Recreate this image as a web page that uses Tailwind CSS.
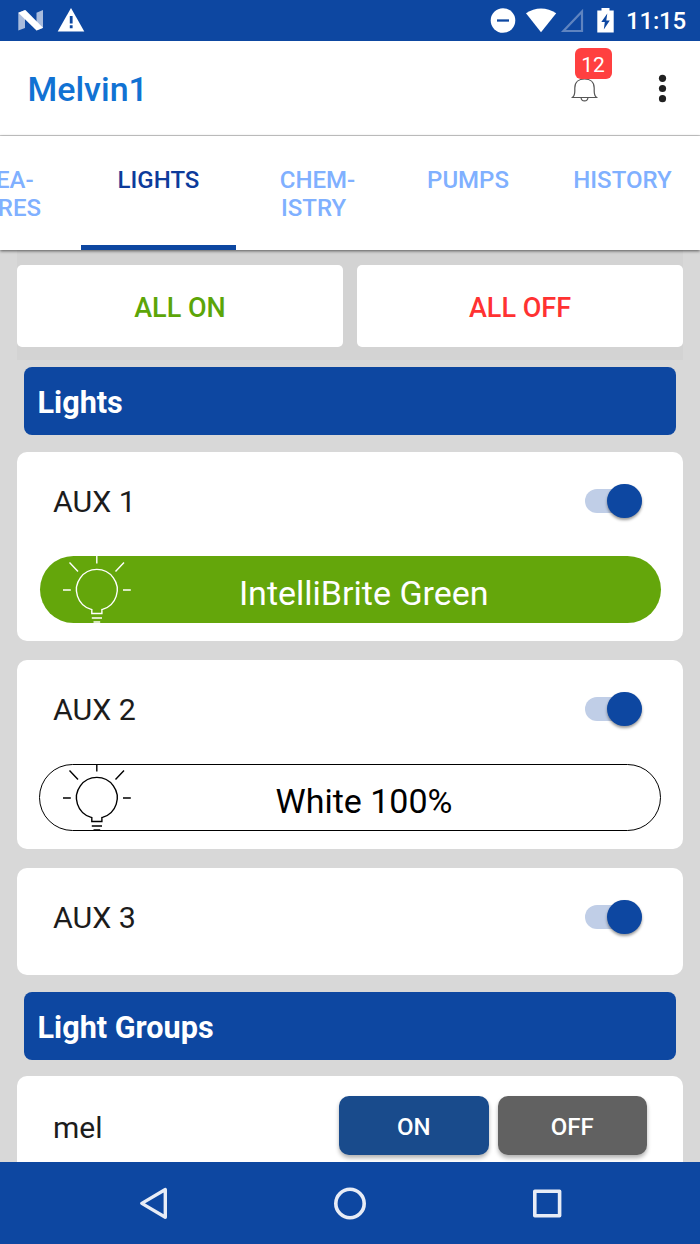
<!DOCTYPE html>
<html lang="en">
<head>
<meta charset="utf-8">
<title>Melvin1 – Lights</title>
<script src="https://cdn.jsdelivr.net/npm/@tailwindcss/browser@4"></script>
</head>
<body class="w-[700px] h-[1244px] overflow-hidden flex flex-col bg-[#d8d8d8] font-['Roboto',sans-serif] text-black">

<svg class="hidden">
  <symbol id="bulb" viewBox="0 0 74 67">
    <g fill="none" stroke="currentColor" stroke-width="1.400">
      <path d="M31.800 57.500V53.500L30.600 53.200A20.4 20.4 0 1 1 43.100 53.200L41.900 53.500V57.500Z"/>
      <path d="M36.800 0V7.500M9.500 6.500L18 15.500M64 6.500L55.500 15.500M3 34H10.800M63 34H70.800M31.800 62H42M33.500 66H40.200"/>
    </g>
  </symbol>
</svg>

<!-- Status bar -->
<div class="h-[41px] shrink-0 bg-[#0d47a1] flex items-center text-white">
  <svg class="w-[100px] h-[41px] shrink-0" viewBox="0 0 100 41">
    <path d="M18.300 12.800L25 10V28L18.300 30.500Z" fill="#a9bcdd"/>
    <path d="M36.500 12.800L43 10V28L36.500 30.500Z" fill="#a9bcdd"/>
    <path d="M18.300 12.800L25.400 10L43 27.700L36.500 30.500Z" fill="#fff"/>
    <path d="M71 8L84.300 31.500H57.700Z" fill="#fff"/>
    <path d="M71.200 16V23.500M71.200 25.300V28.200" stroke="#0d47a1" stroke-width="2.800"/>
  </svg>
  <svg class="w-[160px] h-[41px] shrink-0 ml-[366px]" viewBox="467 0 160 41">
    <circle cx="504" cy="20.500" r="12.300" fill="#fff"/>
    <path d="M498 20.500H510" stroke="#0d47a1" stroke-width="2.300"/>
    <path d="M542 32.200L527 13.300C536 7 548 7 557.200 13.300Z" fill="#fff"/>
    <path d="M583 11.500V31H564.500Z" fill="none" stroke="#5f84c0" stroke-width="2.200"/>
    <path d="M598.300 10.500H602.500V8H610.500V10.500H614.700V32.500H598.300Z" fill="#fff"/>
    <path d="M608.300 13.500L602.300 22H605.800L604.800 29.500L610.800 20.500H607.300Z" fill="#0d47a1"/>
  </svg>
  <div class="text-[24px] leading-[41px] font-medium tracking-[-0.200px] pt-[2px]">11:15</div>
</div>

<!-- App header -->
<header class="h-[95px] shrink-0 bg-white border-b border-[#d0d0d0] flex items-center">
  <h1 class="ml-[27.500px] pt-[2px] text-[34px] leading-[40px] font-medium text-[#1172d3]">Melvin1</h1>
  <div class="ml-auto relative w-[44px] h-[94px]">
    <svg class="w-[44px] h-[94px]" viewBox="570 41 44 94" fill="none" stroke="#555" stroke-width="1.200">
      <path d="M571.500 97.500H597.500M572.500 97.300C574.300 96 574.800 94 574.800 91V88C574.800 82 579 79 584.500 79C590 79 594.200 82 594.200 88V91C594.200 94 594.700 96 596.500 97.300"/>
      <path d="M581 97.500C581.500 102 587.500 102 588 97.500"/>
    </svg>
    <span class="absolute left-[4.500px] top-[7px] w-[37px] h-[31px] rounded-[6px] bg-[#ff4040] text-white text-[21px] leading-[34px] text-center">12</span>
  </div>
  <svg class="w-[86px] h-[94px]" viewBox="614 41 86 94" fill="#212121">
    <circle cx="662.500" cy="78.300" r="3.600"/><circle cx="662.500" cy="88.500" r="3.600"/><circle cx="662.500" cy="98.700" r="3.600"/>
  </svg>
</header>

<!-- Tabs -->
<nav class="relative z-10 h-[114px] shrink-0 bg-white shadow-[0_1px_3px_rgba(0,0,0,0.6)] flex text-[24px] leading-[28px] font-medium text-center text-[#80b0ff]">
  <div class="w-[81px] pt-[30px] flex justify-end pr-[40px] whitespace-nowrap"><span><span class="pl-[8px]">FEA-</span><br>TURES</span></div>
  <div class="w-[155px] pt-[30px] text-[#0d3b9b] border-b-[5px] border-[#0d47a1]">LIGHTS</div>
  <div class="w-[155px] pt-[30px]"><span class="pl-[8px]">CHEM-</span><br>ISTRY</div>
  <div class="w-[154px] pt-[30px]">PUMPS</div>
  <div class="w-[155px] pt-[30px]">HISTORY</div>
</nav>

<main class="h-[912px] shrink-0 overflow-hidden px-[17px]">
  <div class="h-[110px] bg-[#d3d3d3] pt-[15px] flex gap-[14px] text-[27px] leading-[86px] font-medium text-center">
    <div class="flex-1 h-[81.500px] bg-white rounded-[5px] text-[#5ca508]">ALL ON</div>
    <div class="flex-1 h-[81.500px] bg-white rounded-[5px] text-[#ff3232]">ALL OFF</div>
  </div>

  <h2 class="mx-[7px] mt-[7px] h-[68px] rounded-[8px] bg-[#0d47a1] pl-[13.500px] text-white text-[30.600px] leading-[71px] font-bold">Lights</h2>

  <section class="mt-[17px] h-[188.500px] rounded-[10px] bg-white px-[22px] pt-[31px]">
    <div class="h-[40px] flex items-center justify-between pl-[14px] pr-[19.500px]">
      <span class="text-[30.400px] leading-[40px] -mt-[2px] text-[#1c1c1c]">AUX 1</span>
      <div class="w-[57px] h-[24px] -mt-[5px] rounded-full bg-[#c0cee7] flex items-center justify-end"><div class="w-[34.500px] h-[34.500px] mt-px rounded-full bg-[#0d47a1] shadow-[0_2px_3px_rgba(0,0,0,0.4)]"></div></div>
    </div>
    <div class="mt-[33px] h-[66.500px] mx-[0.500px] rounded-full bg-[#64a60b] text-white flex items-center">
      <svg class="w-[74px] h-[67px] ml-[20.500px] shrink-0"><use href="#bulb"/></svg>
      <span class="flex-1 pr-[67px] pt-[8px] text-center text-[34px] leading-[60px]">IntelliBrite Green</span>
    </div>
  </section>

  <section class="mt-[19.500px] h-[188.500px] rounded-[10px] bg-white px-[22px] pt-[31px]">
    <div class="h-[40px] flex items-center justify-between pl-[14px] pr-[19.500px]">
      <span class="text-[30.400px] leading-[40px] -mt-[2px] text-[#1c1c1c]">AUX 2</span>
      <div class="w-[57px] h-[24px] -mt-[5px] rounded-full bg-[#c0cee7] flex items-center justify-end"><div class="w-[34.500px] h-[34.500px] mt-px rounded-full bg-[#0d47a1] shadow-[0_2px_3px_rgba(0,0,0,0.4)]"></div></div>
    </div>
    <div class="mt-[33px] h-[67px] rounded-full border border-black bg-white flex items-center">
      <svg class="w-[74px] h-[67px] ml-[20px] shrink-0"><use href="#bulb"/></svg>
      <span class="flex-1 pr-[66px] pt-[6px] text-center text-[34px] leading-[60px]">White 100%</span>
    </div>
  </section>

  <section class="mt-[19.500px] h-[107px] rounded-[10px] bg-white px-[22px] pt-[31px]">
    <div class="h-[40px] flex items-center justify-between pl-[14px] pr-[19.500px]">
      <span class="text-[30.400px] leading-[40px] -mt-[2px] text-[#1c1c1c]">AUX 3</span>
      <div class="w-[57px] h-[24px] -mt-[5px] rounded-full bg-[#c0cee7] flex items-center justify-end"><div class="w-[34.500px] h-[34.500px] mt-px rounded-full bg-[#0d47a1] shadow-[0_2px_3px_rgba(0,0,0,0.4)]"></div></div>
    </div>
  </section>

  <h2 class="mx-[7px] mt-[16.500px] h-[68px] rounded-[8px] bg-[#0d47a1] pl-[13.500px] text-white text-[30.600px] leading-[71px] font-bold">Light Groups</h2>

  <section class="mt-[16.500px] h-[107px] rounded-t-[10px] bg-white pl-[36px] pr-[36px] pt-[19.500px] flex items-start text-[#1c1c1c]">
    <span class="text-[30px] leading-[63px] mr-auto">mel</span>
    <div class="w-[149.500px] h-[59.500px] rounded-[10px] bg-[#194b8c] text-white text-[24px] leading-[62px] font-medium text-center shadow-[0_3px_4px_rgba(0,0,0,0.3)]">ON</div>
    <div class="ml-[9px] w-[149.500px] h-[59.500px] rounded-[10px] bg-[#616161] text-white text-[24px] leading-[62px] font-medium text-center shadow-[0_3px_4px_rgba(0,0,0,0.3)]">OFF</div>
  </section>
</main>

<!-- System navigation -->
<footer class="h-[82px] shrink-0 bg-[#0d47a1]">
  <svg class="w-[700px] h-[82px]" viewBox="0 1162 700 82" fill="none" stroke="#e7ecf6" stroke-width="3.600" stroke-linejoin="round">
    <path d="M165.300 1189.500V1217.300L141.800 1203.400Z" stroke-width="3.400"/>
    <circle cx="350" cy="1203.500" r="14.200"/>
    <rect x="534.800" y="1191.200" width="24.800" height="24.600"/>
  </svg>
</footer>
</body>
</html>
